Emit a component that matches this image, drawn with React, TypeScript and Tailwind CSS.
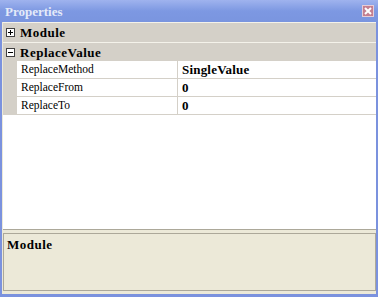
import React from "react";

const serif = "font-['Liberation_Serif','Times_New_Roman',serif]";

function ExpandBox({ open }: { open: boolean }) {
  return (
    <span className="relative flex h-[9px] w-[9px] shrink-0 items-center justify-center border border-[#404040] bg-white">
      <span className="absolute h-px w-[5px] bg-black" />
      {!open && <span className="absolute h-[5px] w-px bg-black" />}
    </span>
  );
}

function CategoryRow({
  label,
  open,
  tall,
}: {
  label: string;
  open: boolean;
  tall?: boolean;
}) {
  return (
    <div
      className={`flex items-center bg-[#d4d0c8] pl-[3px] ${
        tall ? "h-[20px] border-b border-[#f4f2ea]" : "h-[18px]"
      }`}
    >
      <ExpandBox open={open} />
      <span className={`ml-[5px] text-[13px] font-bold leading-none tracking-[0.5px] text-black ${serif}`}>
        {label}
      </span>
    </div>
  );
}

function PropertyRow({ name, value }: { name: string; value: string }) {
  return (
    <div className="flex h-[18px] bg-[#d4d0c8]">
      <div className="w-[14px] shrink-0" />
      <div className="flex w-[161px] shrink-0 items-center border-b border-r border-[#d4d0c8] bg-white pl-[4px]">
        <span className={`text-[11.5px] leading-none text-black ${serif}`}>{name}</span>
      </div>
      <div className="flex flex-1 items-center border-b border-[#d4d0c8] bg-white pl-[4px]">
        <span className={`text-[13px] font-bold leading-none tracking-[0.2px] text-black ${serif}`}>{value}</span>
      </div>
    </div>
  );
}

export default function App() {
  return (
    <div className="flex h-[297px] w-[378px] flex-col bg-[#7b92de]">
      {/* title bar */}
      <div className="flex h-[22px] shrink-0 items-center justify-between bg-gradient-to-b from-[#9fb3ee] via-[#7d98e2] to-[#7a95df] pl-[5px] pr-[4px]">
        <span className={`text-[13px] font-bold leading-none text-[#e4eaf9] ${serif}`}>
          Properties
        </span>
        <span className="flex h-[12px] w-[12px] items-center justify-center border border-[#e6cdd6] bg-[#c47f90]">
          <svg width="8" height="8" viewBox="0 0 8 8">
            <path d="M1 1 L7 7 M7 1 L1 7" stroke="white" strokeWidth="2" />
          </svg>
        </span>
      </div>

      {/* body */}
      <div className="mx-[2px] mb-[3px] flex flex-1 flex-col bg-[#ece9d8] pl-px">
        <div className="flex h-[207px] shrink-0 flex-col border-t border-[#f4f2ea] bg-white">
          <CategoryRow label="Module" open={false} tall />
          <CategoryRow label="ReplaceValue" open />
          <PropertyRow name="ReplaceMethod" value="SingleValue" />
          <PropertyRow name="ReplaceFrom" value="0" />
          <PropertyRow name="ReplaceTo" value="0" />
        </div>
        <div className="h-px shrink-0 bg-[#aca899]" />
        <div className="h-[3px] shrink-0" />
        <div className="flex h-[58px] shrink-0 flex-col border border-[#aca899] bg-[#ece9d8] px-[3px] pt-[4px]">
          <span className={`text-[13px] font-bold leading-none tracking-[0.5px] text-black ${serif}`}>Module</span>
        </div>
      </div>
    </div>
  );
}
